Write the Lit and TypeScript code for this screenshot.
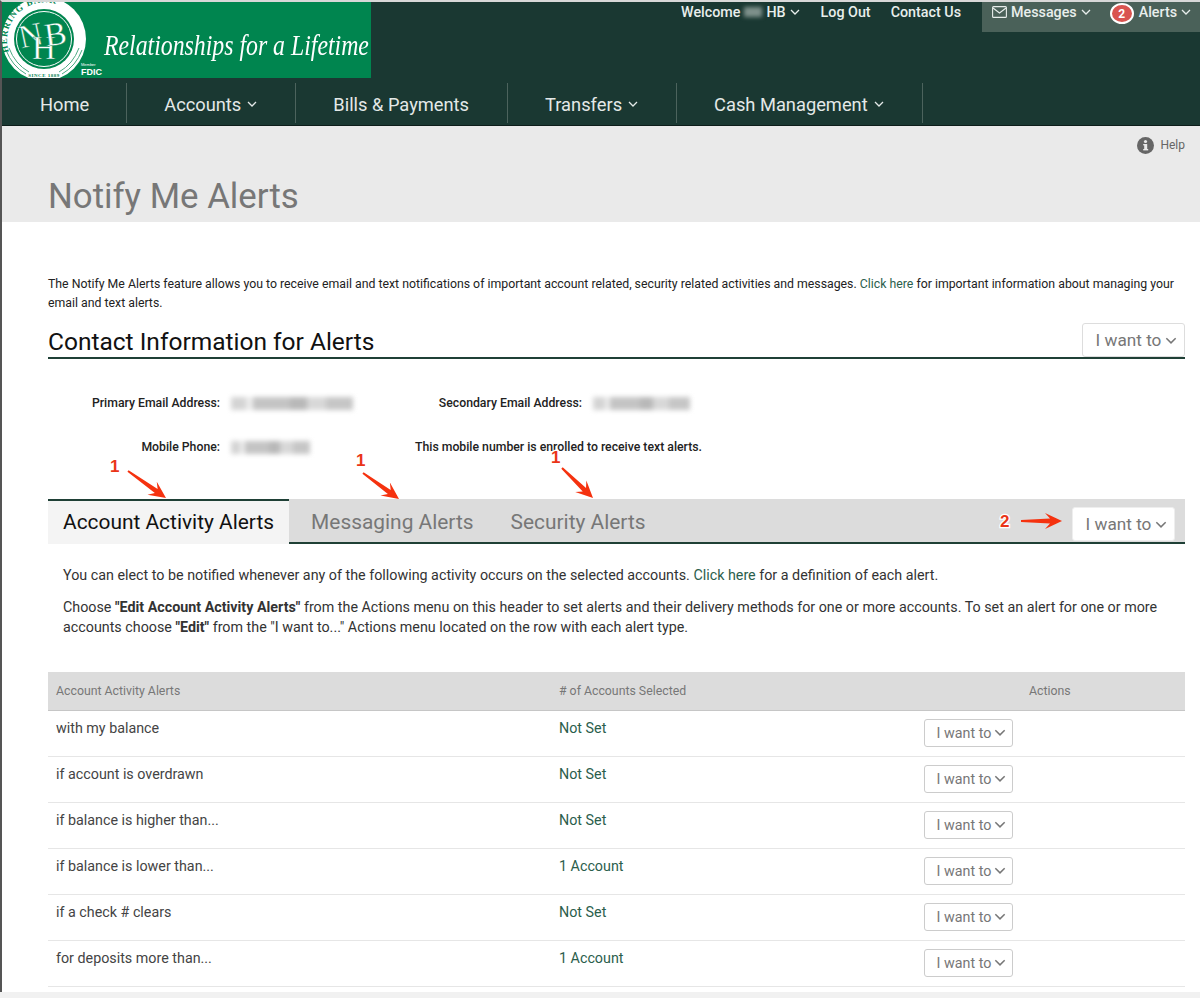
import { LitElement, html, css, svg } from 'lit';
import { customElement } from 'lit/decorators.js';

const chevron = html`<svg class="chev" viewBox="0 0 10 6"><polyline points="1,1 5,5 9,1"></polyline></svg>`;

const rows = [
  ['with my balance', 'Not Set'],
  ['if account is overdrawn', 'Not Set'],
  ['if balance is higher than...', 'Not Set'],
  ['if balance is lower than...', '1 Account'],
  ['if a check # clears', 'Not Set'],
  ['for deposits more than...', '1 Account'],
];

// callouts pasted on top of the screenshot
const marks = [
  { n: '1', x: 110, y: 472, from: [128, 471], to: [166, 498] },
  { n: '1', x: 356, y: 466, from: [363, 473], to: [399, 499] },
  { n: '1', x: 551, y: 463, from: [562, 468], to: [593, 498] },
  { n: '2', x: 1000, y: 527, from: [1021, 521], to: [1062, 521] },
];

function arrow(from: number[], to: number[]) {
  const dx = to[0] - from[0];
  const dy = to[1] - from[1];
  const len = Math.hypot(dx, dy);
  const ux = dx / len;
  const uy = dy / len;
  const at = (along: number, side: number) =>
    `${from[0] + ux * along - uy * side},${from[1] + uy * along + ux * side}`;
  const neck = len - 15;
  return [at(0, -1), at(neck + 3, -2.4), at(neck - 2, -8), at(len, 0), at(neck - 2, 8), at(neck + 3, 2.4), at(0, 1)].join(' ');
}

@customElement('app-root')
export class AppRoot extends LitElement {
  static styles = css`
    :host {
      display: block;
      position: relative;
      width: 1200px;
      height: 998px;
      overflow: hidden;
      background: #f1f1f1;
      font-family: Roboto, "Liberation Sans", sans-serif;
      color: #333;
    }

    .page {
      height: 990px;
      border-top: 2px solid #d8d8d8;
      border-left: 2px solid #555;
      background: #fff;
      overflow: hidden;
    }

    .chev {
      width: 10px;
      height: 6px;
      fill: none;
      stroke: currentColor;
      stroke-width: 1.3;
      flex-shrink: 0;
    }

    header {
      height: 123px;
      background: #1a3832;
      border-bottom: 1px solid #0d1d1a;
      color: #e8eeec;
    }

    .top {
      display: flex;
      height: 81px;
      justify-content: space-between;
    }

    .logo {
      width: 369px;
      height: 76px;
      background: #00854f;
      display: flex;
      overflow: hidden;
      flex-shrink: 0;
    }

    .logo svg {
      display: block;
      flex-shrink: 0;
    }

    .tagline {
      font-family: "Liberation Serif", serif;
      font-style: italic;
      color: #fff;
      font-size: 29px;
      line-height: 76px;
      margin-top: 5px;
      white-space: nowrap;
      transform: scaleX(0.82);
      transform-origin: left center;
    }

    .util {
      display: flex;
      align-items: flex-start;
      font-size: 14.3px;
      font-weight: 500;
    }

    .util-links {
      display: flex;
      gap: 20px;
      height: 20px;
      align-items: center;
      margin-right: 21px;
    }

    .welcome {
      display: flex;
      align-items: center;
      gap: 4px;
      margin-right: 1px;
    }

    .blurname {
      width: 18px;
      height: 10px;
      background: #7f918c;
      filter: blur(2px);
    }

    .panel {
      width: 218px;
      height: 30px;
      background: #4a6159;
      display: flex;
      align-items: flex-start;
      padding: 0 0 0 10px;
      box-sizing: border-box;
    }

    .panel .item {
      display: flex;
      align-items: center;
      gap: 4px;
      height: 20px;
    }

    .envelope {
      width: 15px;
      height: 12px;
      fill: none;
      stroke: currentColor;
      stroke-width: 1.1;
    }

    .badge {
      width: 20px;
      height: 17px;
      border: 2px solid #fff;
      border-radius: 50%;
      background: #d9534f;
      color: #fff;
      font-size: 12px;
      font-weight: 700;
      display: flex;
      align-items: center;
      justify-content: center;
      margin: 1px 5px 0 19px;
    }

    nav {
      display: flex;
      height: 40px;
      font-size: 18.3px;
    }

    nav div {
      display: flex;
      align-items: center;
      gap: 6px;
      padding: 2px 38px 0 37px;
      border-right: 1px solid #4c635d;
      color: #e4e9e8;
    }

    nav div:first-child {
      padding-left: 38px;
      padding-right: 37px;
    }

    .band {
      height: 96px;
      background: #eaeaea;
      padding-left: 46px;
    }

    .help {
      display: flex;
      justify-content: flex-end;
      align-items: center;
      gap: 6px;
      height: 38px;
      padding-right: 15px;
      font-size: 12px;
      color: #666;
    }

    .help svg {
      width: 17px;
      height: 17px;
    }

    h1 {
      margin: 12px 0 0;
      font-size: 34.8px;
      line-height: 40px;
      font-weight: 400;
      color: #777;
    }

    main {
      padding: 53px 15px 0 46px;
    }

    .intro {
      margin: 0;
      font-size: 12.3px;
      line-height: 19px;
      color: #222;
    }

    a {
      color: #2b5e4c;
      text-decoration: none;
    }

    .section-head {
      display: flex;
      justify-content: space-between;
      align-items: flex-end;
      height: 36px;
      margin-top: 8px;
      border-bottom: 2px solid #1f4036;
    }

    h2 {
      margin: 0;
      font-size: 24.5px;
      line-height: 30px;
      font-weight: 400;
      color: #111;
    }

    .want {
      display: flex;
      align-items: center;
      justify-content: center;
      gap: 4px;
      width: 103px;
      height: 34px;
      padding-left: 6px;
      box-sizing: border-box;
      border: 1px solid #ddd;
      border-radius: 3px;
      background: #fff;
      color: #777;
      font-size: 17.2px;
    }

    .want .chev {
      width: 12px;
      height: 7px;
    }

    .want.small {
      width: 89px;
      height: 28px;
      padding-bottom: 1px;
      font-size: 14.3px;
      gap: 3px;
      border-color: #ccc;
    }

    .info {
      display: grid;
      grid-template-columns: 172px 133px 60px 169px auto;
      grid-auto-rows: 44px;
      margin-top: 22px;
      font-size: 12.25px;
      font-weight: 500;
      color: #222;
      align-items: center;
    }

    .info .label {
      text-align: right;
      white-space: nowrap;
    }

    .mobile-note {
      grid-column: 3 / span 3;
      padding-left: 62px;
    }

    .smudge {
      height: 13px;
      margin-left: 11px;
      background: linear-gradient(90deg, #d4d4d4 0 12%, #ececec 12% 18%, #c4c4c4 18% 48%, #b8b8b8 48% 62%, #d8d8d8 62% 78%, #c6c6c6 78% 100%);
      filter: blur(2.5px);
    }

    .tabs {
      display: flex;
      align-items: stretch;
      height: 45px;
      margin-top: 30px;
      background: #dcdcdc;
    }

    .tab {
      display: flex;
      align-items: center;
      font-size: 20.9px;
      color: #777;
      border-bottom: 2px solid #1f4036;
      padding: 2px 37px 0 0;
    }

    .tab.active {
      background: #f4f4f4;
      color: #111;
      border-top: 2px solid #1f4036;
      border-bottom: 0;
      padding: 0 15px 2px;
      margin-right: 22px;
      position: relative;
    }

    .tab.active::after {
      content: "";
      position: absolute;
      left: 100%;
      bottom: 0;
      width: 22px;
      height: 2px;
      background: #1f4036;
    }

    .tabs-fill {
      flex: 1;
      display: flex;
      justify-content: flex-end;
      align-items: center;
      padding: 7px 10px 0 0;
      border-bottom: 2px solid #1f4036;
    }

    .tabs-fill .want {
      border-color: #eee;
    }

    .desc {
      padding: 0 15px;
      font-size: 14.3px;
      line-height: 20px;
      color: #333;
    }

    .desc p {
      margin: 21px 0 0;
    }

    .desc p + p {
      margin-top: 12px;
    }

    .desc b {
      font-weight: 700;
    }

    .grid-row {
      display: grid;
      grid-template-columns: 503px 365px 1fr;
      padding-left: 8px;
      box-sizing: border-box;
    }

    .thead {
      height: 39px;
      margin-top: 35px;
      align-items: center;
      background: #dcdcdc;
      border-bottom: 1px solid #c6c6c6;
      font-size: 12.3px;
      color: #777;
    }

    .thead span:last-child {
      padding-left: 105px;
    }

    .row {
      height: 46px;
      border-bottom: 1px solid #e6e6e6;
      font-size: 14.3px;
      color: #444;
      padding-top: 9px;
    }

    .row span {
      line-height: 17px;
    }

    .row .status {
      color: #2b5e4c;
    }

    .row .want {
      margin-top: -1px;
    }

    .overlay {
      position: absolute;
      left: 0;
      top: 0;
      width: 1200px;
      height: 998px;
      pointer-events: none;
    }

    .overlay text {
      font-family: "Liberation Sans", sans-serif;
      font-weight: 700;
      font-size: 17px;
      fill: #ea3418;
      stroke: #fff;
      stroke-width: 2.5px;
      paint-order: stroke;
    }

    .overlay polygon {
      fill: #f5320f;
    }
  `;

  renderLogo() {
    return html`<svg width="102" height="76" viewBox="0 0 102 76">
      <defs>
        <path id="ring" d="M 7 50 A 35.5 35.5 0 0 1 78 26"></path>
      </defs>
      <circle cx="42" cy="37" r="42" fill="#fff"></circle>
      <circle cx="42" cy="37" r="30" fill="#00854f"></circle>
      <circle cx="42" cy="37" r="27.5" fill="none" stroke="#fff" stroke-width="1"></circle>
      <g fill="none" stroke="#00854f" opacity="0.7" stroke-width="1">
        <path d="M4 48 Q10 64 24 72"></path>
        <path d="M7 46 Q13 62 27 70"></path>
        <path d="M80 48 Q74 64 60 72"></path>
        <path d="M77 46 Q71 62 57 70"></path>
      </g>
      <text font-family="Liberation Serif, serif" font-weight="700" font-size="9" letter-spacing="1" fill="#00854f">
        <textPath href="#ring">HERRING BANK</textPath>
      </text>
      <text x="42" y="75" font-family="Liberation Serif, serif" font-weight="700" font-size="5" letter-spacing="0.5" fill="#00854f" text-anchor="middle">SINCE 1889</text>
      <g font-family="Liberation Serif, serif" fill="#fff" stroke="#00854f" stroke-width="0.4" text-anchor="middle" font-size="33">
        <text transform="translate(31 44) rotate(-12)">N</text>
        <text x="42" y="57">H</text>
        <text transform="translate(55 43) rotate(-8)">B</text>
      </g>
      <text x="79" y="73" font-family="Liberation Sans, sans-serif" font-weight="700" font-size="9" fill="#fff">FDIC</text>
      <text x="79" y="64" font-family="Liberation Sans, sans-serif" font-size="4" fill="#fff">Member</text>
    </svg>`;
  }

  render() {
    return html`
      <div class="page">
        <header>
          <div class="top">
            <div class="logo">
              ${this.renderLogo()}
              <div class="tagline">Relationships for a Lifetime</div>
            </div>
            <div class="util">
              <div class="util-links">
                <span class="welcome">Welcome <i class="blurname"></i> HB ${chevron}</span>
                <span>Log Out</span>
                <span>Contact Us</span>
              </div>
              <div class="panel">
                <span class="item">
                  <svg class="envelope" viewBox="0 0 15 12"><rect x="0.6" y="0.6" width="13.8" height="10.8" rx="1"></rect><polyline points="1,2 7.5,7 14,2"></polyline></svg>
                  Messages ${chevron}
                </span>
                <span class="badge">2</span>
                <span class="item">Alerts ${chevron}</span>
              </div>
            </div>
          </div>
          <nav>
            <div>Home</div>
            <div>Accounts ${chevron}</div>
            <div>Bills &amp; Payments</div>
            <div>Transfers ${chevron}</div>
            <div>Cash Management ${chevron}</div>
          </nav>
        </header>

        <section class="band">
          <div class="help">
            <svg viewBox="0 0 17 17"><circle cx="8.5" cy="8.5" r="8.5" fill="#666"></circle><rect x="7.2" y="7" width="3" height="6" fill="#eaeaea"></rect><rect x="6.2" y="7" width="3" height="1.4" fill="#eaeaea"></rect><rect x="6.2" y="12" width="5" height="1.4" fill="#eaeaea"></rect><circle cx="8.5" cy="4.5" r="1.6" fill="#eaeaea"></circle></svg>
            Help
          </div>
          <h1>Notify Me Alerts</h1>
        </section>

        <main>
          <p class="intro">The Notify Me Alerts feature allows you to receive email and text notifications of important account related, security related activities and messages. <a>Click here</a> for important information about managing your email and text alerts.</p>

          <div class="section-head">
            <h2>Contact Information for Alerts</h2>
            <div class="want">I want to ${chevron}</div>
          </div>

          <div class="info">
            <span class="label">Primary Email Address:</span>
            <div class="smudge"></div>
            <span></span>
            <span class="label">Secondary Email Address:</span>
            <div class="smudge" style="width:97px"></div>
            <span class="label">Mobile Phone:</span>
            <div class="smudge" style="width:79px"></div>
            <span class="mobile-note">This mobile number is enrolled to receive text alerts.</span>
          </div>

          <div class="tabs">
            <div class="tab active">Account Activity Alerts</div>
            <div class="tab">Messaging Alerts</div>
            <div class="tab">Security Alerts</div>
            <div class="tabs-fill"><div class="want">I want to ${chevron}</div></div>
          </div>

          <div class="desc">
            <p>You can elect to be notified whenever any of the following activity occurs on the selected accounts. <a>Click here</a> for a definition of each alert.</p>
            <p>Choose <b>"Edit Account Activity Alerts"</b> from the Actions menu on this header to set alerts and their delivery methods for one or more accounts. To set an alert for one or more accounts choose <b>"Edit"</b> from the "I want to..." Actions menu located on the row with each alert type.</p>
          </div>

          <div class="grid-row thead">
            <span>Account Activity Alerts</span>
            <span># of Accounts Selected</span>
            <span>Actions</span>
          </div>
          ${rows.map(
            ([name, status]) => html`
              <div class="grid-row row">
                <span>${name}</span>
                <span class="status">${status}</span>
                <div class="want small">I want to ${chevron}</div>
              </div>
            `
          )}
        </main>
      </div>

      <svg class="overlay" viewBox="0 0 1200 998">
        ${marks.map(
          (m) => svg`<text x=${m.x} y=${m.y}>${m.n}</text><polygon points=${arrow(m.from, m.to)}></polygon>`
        )}
      </svg>
    `;
  }
}
